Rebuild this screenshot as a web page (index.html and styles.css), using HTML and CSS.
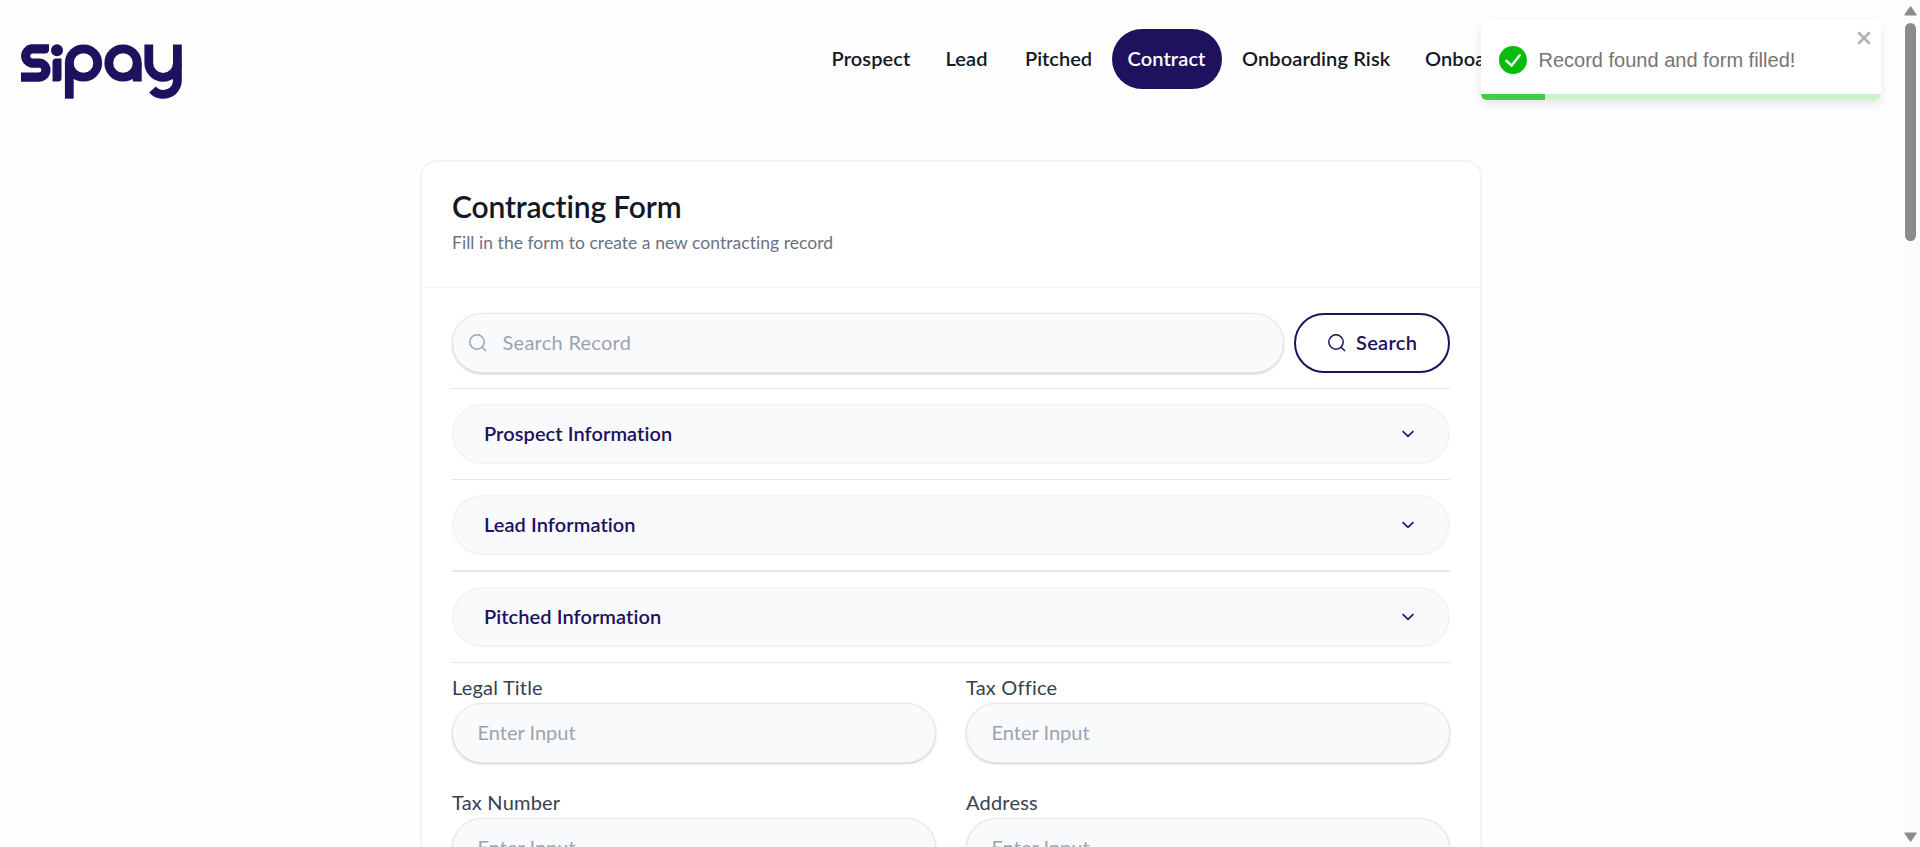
FILE: index.html
```html
<!DOCTYPE html>
<html lang="en">
<head>
<meta charset="utf-8">
<title>Contracting Form</title>
<link rel="stylesheet" href="styles.css">
</head>
<body>
<div class="viewport">
<div class="page">
  <header class="topbar">
    <svg class="logo" viewBox="0 0 164 56" role="img" aria-label="sipay">
      <g fill="none" stroke="#20115f" stroke-width="8.8">
        <path d="M24 4.9H11.6A7.2 7.2 0 0 0 11.6 19.1H19A7 7 0 0 1 19 33.1H1" stroke-width="9.2"/>
        <circle cx="63.5" cy="19" r="14.2"/>
        <path d="M49.3 19V54.7"/>
        <circle cx="103" cy="19" r="14.2"/>
        <path d="M117.3 19V37.5"/>
        <path d="M128.8.5V19A14.2 14.2 0 0 0 157.4 19V.5"/>
        <path d="M157.4 19V36A14.2 14.2 0 0 1 132.5 45.5"/>
      </g>
      <g fill="#20115f">
        <path d="M23 .3H29V5.5Q29 9.5 25 9.5H23Z"/>
        <circle cx="37" cy="6.2" r="6"/>
        <path d="M32.5 18Q32.5 14.5 36 14.5H41.5V34Q41.5 37.5 38 37.5H32.5Z"/>
      </g>
    </svg>
    <nav class="nav">
      <a class="nav-item w-prospect">Prospect</a>
      <a class="nav-item w-lead">Lead</a>
      <a class="nav-item w-pitched">Pitched</a>
      <a class="nav-item active w-contract">Contract</a>
      <a class="nav-item w-risk">Onboarding Risk</a>
      <a class="nav-item w-ops">Onboarding</a>
    </nav>
  </header>

  <main class="card">
    <div class="card-head">
      <h1>Contracting Form</h1>
      <p>Fill in the form to create a new contracting record</p>
    </div>
    <div class="card-body">
      <div class="search-row">
        <label class="search-box">
          <svg class="mag" viewBox="0 0 18 18"><circle cx="8" cy="8" r="7.2"/><path d="M13.2 13.2L17 17"/></svg>
          <input type="text" placeholder="Search Record">
        </label>
        <button class="search-btn">
          <svg class="mag" viewBox="0 0 18 18"><circle cx="8" cy="8" r="7.2"/><path d="M13.2 13.2L17 17"/></svg>
          <span>Search</span>
        </button>
      </div>
      <hr>
      <button class="section"><span>Prospect Information</span><svg class="chev" viewBox="0 0 12 8"><path d="M.6 1.2L6 6.4L11.4 1.2"/></svg></button>
      <hr>
      <button class="section"><span>Lead Information</span><svg class="chev" viewBox="0 0 12 8"><path d="M.6 1.2L6 6.4L11.4 1.2"/></svg></button>
      <hr class="thick">
      <button class="section"><span>Pitched Information</span><svg class="chev" viewBox="0 0 12 8"><path d="M.6 1.2L6 6.4L11.4 1.2"/></svg></button>
      <hr class="last">
      <div class="fields">
        <label class="field"><span>Legal Title</span><input type="text" placeholder="Enter Input"></label>
        <label class="field"><span>Tax Office</span><input type="text" placeholder="Enter Input"></label>
        <label class="field"><span>Tax Number</span><input type="text" placeholder="Enter Input"></label>
        <label class="field"><span>Address</span><input type="text" placeholder="Enter Input"></label>
      </div>
    </div>
  </main>
</div>

<aside class="scrollbar">
  <svg class="arrow" viewBox="0 0 13 10"><path d="M6.5 1.2L11.8 8.8H1.2Z"/></svg>
  <div class="thumb"></div>
  <svg class="arrow down" viewBox="0 0 13 10"><path d="M6.5 8.8L11.8 1.2H1.2Z"/></svg>
</aside>
</div>

<div class="toast" role="alert">
  <div class="toast-body">
    <svg class="ok" viewBox="0 0 28 28"><circle cx="14" cy="14" r="14"/><path d="M7.4 14.8L12.6 19.6L20.8 9.2"/></svg>
    <span>Record found and form filled!</span>
  </div>
  <svg class="close" viewBox="0 0 14 14"><path d="M2 2L12 12M12 2L2 12"/></svg>
  <div class="progress"><div class="progress-fill"></div></div>
</div>
</body>
</html>
```
FILE: styles.css
```css
* { box-sizing: border-box; }
body { margin: 0; background: #fefefe; font-family: Lato, "Liberation Sans", sans-serif; font-size: 20px; font-variant-ligatures: none; color: #111827; }
.viewport { display: flex; height: 847px; overflow: hidden; }
.page { flex: 1; min-width: 0; overflow: hidden; }
.topbar { display: flex; height: 160px; padding: 29px 0 0 20px; overflow: hidden; }
.logo { width: 164px; height: 56px; margin-top: 15px; flex: none; }
.nav { display: flex; gap: 3px; margin-left: 632px; white-space: nowrap; }
.nav-item { height: 60px; line-height: 59px; padding-left: 15.5px; border-radius: 30px; font-weight: 600; letter-spacing: .12px; flex: none; }
.active { background: #20115f; color: #fff; }
.w-prospect { width: 111px; }
.w-lead { width: 76px; }
.w-pitched { width: 100px; padding-left: 16px; letter-spacing: 0; }
.w-contract { width: 110px; }
.w-risk { width: 180px; padding-left: 16px; }
.w-ops { padding-left: 16px; }
.nav .w-contract { margin-right: 1px; }

.card { width: 1062px; height: 900px; margin-left: 420px; border: 2px solid #f3f4f6; border-radius: 16px; background: #fff; }
.card-head { height: 126px; padding: 24px 30px 0; border-bottom: 1px solid #f3f4f6; }
h1 { margin: 0; font-size: 30px; line-height: 40px; font-weight: 600; letter-spacing: -.15px; white-space: nowrap; }
.card-head p { margin: 3px 0 0; font-size: 17.5px; line-height: 28px; letter-spacing: .04px; color: #6b7280; white-space: nowrap; }
.card-body { padding: 25px 30px 0 30px; }
.search-row { display: flex; gap: 10px; height: 60px; }
.search-box { flex: 1; display: flex; align-items: center; padding-left: 15.5px; gap: 16px; color: #9ca3af; }
.search-box, .field input { border: 1px solid #e5e7eb; border-radius: 30px; background: #f9fafb; box-shadow: 0 1px 3px rgba(0,0,0,.1), 0 1px 2px rgba(0,0,0,.1); }
input { font: inherit; outline: 0; color: #111827; }
.search-box input { flex: 1; border: 0; padding: 0 0 2px; background: none; letter-spacing: .27px; }
input::placeholder { color: #9ca3af; opacity: 1; }
.mag { width: 18px; height: 18px; fill: none; stroke: currentColor; stroke-width: 1.5; flex: none; }
.search-btn { width: 156px; display: flex; align-items: center; padding: 0 0 0 32px; gap: 10px; border: 2px solid #20115f; border-radius: 30px; background: #fff; color: #20115f; font: inherit; font-weight: 600; letter-spacing: .3px; }
.search-btn span, .section span { padding-bottom: 2px; }
hr { height: 1px; margin: 15px 0; border: 0; background: #e5e7eb; }
.thick { height: 2px; }
.last { margin-bottom: 14px; }
.section { width: 100%; height: 60px; display: flex; align-items: center; justify-content: space-between; padding: 0 34px 0 30px; border: 2px solid #f3f4f6; border-radius: 30px; background: #f9fafb; color: #20115f; font: inherit; font-variant-ligatures: none; font-weight: 600; letter-spacing: .08px; }
.chev { width: 12px; height: 8px; fill: none; stroke: #20115f; stroke-width: 1.6; }
.fields { display: grid; grid-template-columns: 1fr 1fr; gap: 29px 30px; }
.field { display: block; color: #374151; }
.field span { display: block; height: 26px; line-height: 21px; letter-spacing: .2px; }
.field input { display: block; width: 100%; height: 60px; padding: 0 25px 2px 24.5px; }

.toast { position: absolute; left: 1481px; top: 20px; width: 400px; height: 80px; border-radius: 6px; background: #fff; box-shadow: 0 4px 12px rgba(0,0,0,.1); font-family: "Liberation Sans", Arial, sans-serif; color: #757575; overflow: visible; }
.toast-body { height: 80px; padding-left: 18px; display: flex; align-items: center; gap: 11.5px; white-space: nowrap; }
.ok { width: 28px; height: 28px; fill: #07bc0c; }
.ok path { fill: none; stroke: #fff; stroke-width: 2.4; stroke-linecap: round; }
.close { position: absolute; right: 10px; top: 11px; width: 14px; height: 14px; stroke: #b2b2b2; stroke-width: 2.6; stroke-linecap: round; }
.progress { position: absolute; left: 0; bottom: 0; width: 100%; height: 6px; overflow: hidden; border-radius: 0 0 6px 6px; background: #cdf2ce; }
.progress-fill { width: 64px; height: 6px; background: #41cd45; }

.scrollbar { width: 19px; height: 847px; padding: 6px 0 5px; background: #fcfcfc; display: flex; flex-direction: column; align-items: center; }
.arrow { width: 13px; height: 10px; fill: #8b8b8b; stroke: #8b8b8b; stroke-width: 1.6; stroke-linejoin: round; }
.thumb { width: 11px; height: 218px; margin-top: 7px; border-radius: 6px; background: #8b8b8b; }
.down { margin-top: auto; }
```
